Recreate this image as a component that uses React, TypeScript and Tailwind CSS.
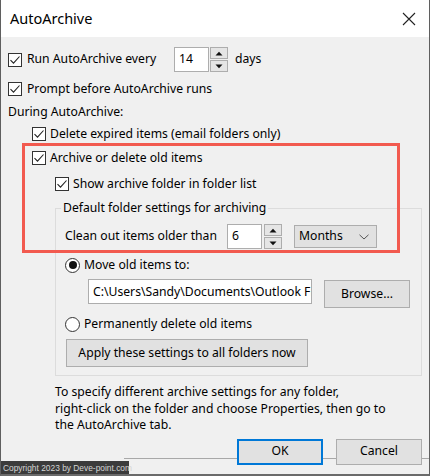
import React from "react";

function Check() {
  return (
    <span className="w-[14px] h-[14px] shrink-0 border border-[#333333] bg-white flex items-center justify-center">
      <svg width="12" height="12" viewBox="0 0 12 12">
        <path d="M1.5 6.2 L4.5 9.2 L10.5 2.5" fill="none" stroke="#222" strokeWidth="1.1" />
      </svg>
    </span>
  );
}

function Radio({ on }: { on?: boolean }) {
  return (
    <span className="w-[15px] h-[15px] shrink-0 rounded-full border border-[#333333] bg-white flex items-center justify-center">
      {on && <span className="w-[8px] h-[8px] rounded-full bg-[#111]" />}
    </span>
  );
}

function Spin() {
  return (
    <div className="w-[18px] h-[25px] flex flex-col shrink-0">
      <div className="h-[12px] border border-[#adadad] bg-[#e5e5e5] flex items-center justify-center">
        <svg width="8" height="5" viewBox="0 0 8 5">
          <path d="M0.5 4.5 L4 0.8 L7.5 4.5 Z" fill="#111" />
        </svg>
      </div>
      <div className="h-[12px] mt-[1px] border border-[#adadad] bg-[#e5e5e5] flex items-center justify-center">
        <svg width="8" height="5" viewBox="0 0 8 5">
          <path d="M0.5 0.5 L4 4.2 L7.5 0.5 Z" fill="#111" />
        </svg>
      </div>
    </div>
  );
}

export default function App() {
  return (
    <div className="w-[430px] h-[476px] relative overflow-hidden bg-[#f0f0f0] border-x border-[#5f5f5f] border-b-2 border-b-[#6a6a6a] font-['Noto_Sans',sans-serif] text-[12.2px] text-black leading-none">
      {/* title bar */}
      <div className="h-[37px] bg-white flex items-center justify-between pl-[9px] pr-[13px]">
        <span className="text-[14.5px] pb-[1px]">AutoArchive</span>
        <svg width="14" height="14" viewBox="0 0 14 14">
          <path d="M1 1 L13 13 M13 1 L1 13" stroke="#222" strokeWidth="1.1" />
        </svg>
      </div>

      {/* line running behind the buttons */}
      <div className="absolute left-[123px] right-0 top-[458px] h-[1px] bg-[#a8a8a8]" />

      {/* dialog body */}
      <div className="relative pl-[7px] pr-[7px] flex flex-col">
        <div className="mt-[10px] h-[25px] flex items-center">
          <div className="w-[166px] flex items-center gap-[5px]">
            <Check />
            <span>Run AutoArchive every</span>
          </div>
          <div className="w-[35px] h-[25px] border border-[#adadad] bg-white flex items-center pl-[4px]">14</div>
          <div className="ml-[1px]">
            <Spin />
          </div>
          <span className="ml-[7px]">days</span>
        </div>

        <div className="mt-[5px] h-[24px] flex items-center gap-[5px]">
          <Check />
          <span>Prompt before AutoArchive runs</span>
        </div>

        <div className="h-[22px] flex items-center">During AutoArchive:</div>

        <div className="h-[22px] pl-[24px] flex items-center gap-[4px]">
          <Check />
          <span>Delete expired items (email folders only)</span>
        </div>

        <div className="h-[26px] pl-[24px] flex items-center gap-[4px]">
          <Check />
          <span>Archive or delete old items</span>
        </div>

        <div className="h-[26px] pl-[47px] flex items-center gap-[4px]">
          <Check />
          <span>Show archive folder in folder list</span>
        </div>

        {/* default folder settings group */}
        <fieldset className="ml-[47px] w-[367px] mt-[3px] border border-[#dcdcdc] pl-[5px] pb-[8px]">
          <legend className="px-[2px] leading-[16px]">Default folder settings for archiving</legend>

          <div className="mt-[8px] h-[25px] flex items-center">
            <span className="ml-[4px] w-[162px] whitespace-nowrap">Clean out items older than</span>
            <div className="w-[35px] h-[25px] border border-[#adadad] bg-white flex items-center pl-[4px]">6</div>
            <div className="ml-[2px]">
              <Spin />
            </div>
            <div className="ml-[12px] w-[83px] h-[23px] border border-[#adadad] bg-[#e1e1e1] flex items-center justify-between pl-[4px] pr-[7px]">
              <span>Months</span>
              <svg width="10" height="6" viewBox="0 0 10 6">
                <path d="M0.5 0.8 L5 5 L9.5 0.8" fill="none" stroke="#555" strokeWidth="1" />
              </svg>
            </div>
          </div>

          <div className="mt-[4px] h-[24px] pl-[4px] flex items-center gap-[4px]">
            <Radio on />
            <span>Move old items to:</span>
          </div>

          <div className="mt-[2px] pl-[27px] flex items-start">
            <input
              readOnly
              value="C:\Users\Sandy\Documents\Outlook Files\archive.pst"
              className="w-[224px] h-[25px] border border-[#adadad] bg-white pl-[4px] outline-none text-black"
            />
            <div className="ml-[12px] mt-[1px] w-[86px] h-[28px] border border-[#adadad] bg-[#e1e1e1] flex items-center justify-center">
              Browse...
            </div>
          </div>

          <div className="mt-[4px] h-[24px] pl-[4px] flex items-center gap-[4px]">
            <Radio />
            <span>Permanently delete old items</span>
          </div>

          <div className="mt-[3px] ml-[5px] w-[242px] h-[28px] border border-[#adadad] bg-[#e1e1e1] flex items-center justify-center">
            Apply these settings to all folders now
          </div>
        </fieldset>

        <p className="mt-[8px] pl-[47px] leading-[16.5px]">
          To specify different archive settings for any folder,
          <br />
          right-click on the folder and choose Properties, then go to
          <br />
          the AutoArchive tab.
        </p>

        <div className="mt-[5px] h-[26px] flex justify-end gap-[13px]">
          <div className="w-[86px] h-[26px] border-2 border-[#0078d7] bg-[#e1e1e1] flex items-center justify-center">OK</div>
          <div className="w-[86px] h-[26px] border border-[#adadad] bg-[#e1e1e1] flex items-center justify-center">Cancel</div>
        </div>
      </div>

      {/* highlight frame */}
      <div className="absolute left-[21px] top-[143px] w-[378px] h-[110px] border-[3px] border-[#f25a4f] pointer-events-none" />

      {/* copyright badge */}
      <div className="absolute left-[-1px] bottom-[-2px] w-[129px] h-[15px] bg-[#3b3b3b] text-[#d4d4d4] text-[8.4px] font-['Liberation_Sans',sans-serif] flex items-center pl-[3px] whitespace-nowrap">
        Copyright 2023 by Deve-point.com
      </div>
    </div>
  );
}
